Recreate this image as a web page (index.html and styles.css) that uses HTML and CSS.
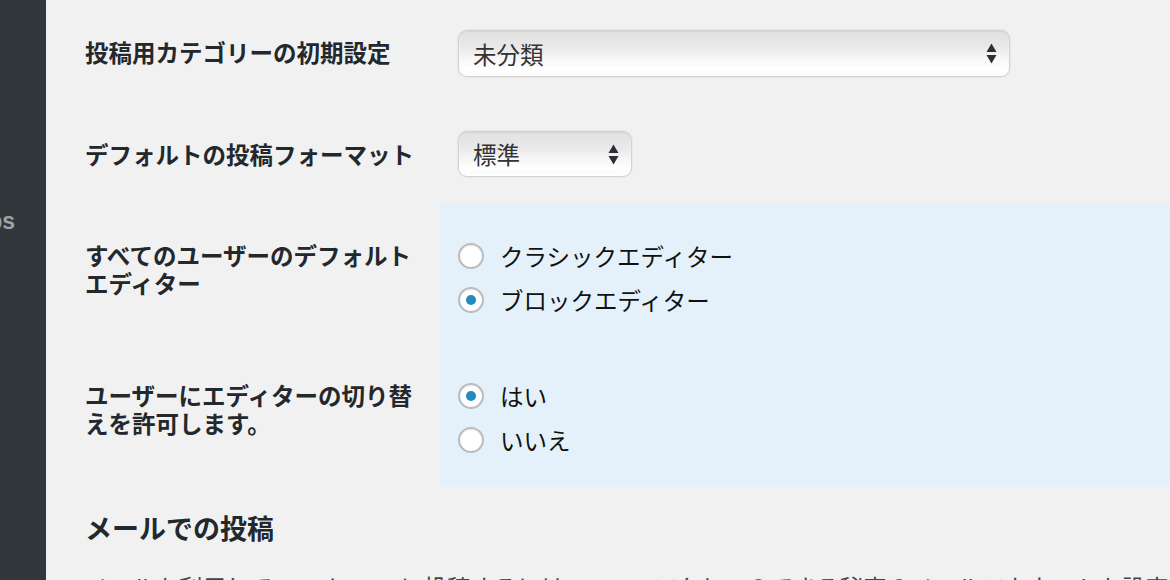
FILE: index.html
```html
<!DOCTYPE html>
<html lang="ja">
<head>
<meta charset="utf-8">
<title>投稿設定</title>
<link rel="stylesheet" href="styles.css">
</head>
<body>
<div class="wrap">
  <nav class="sidebar">
    <div class="menu-item"><span>Popups</span></div>
  </nav>
  <main class="main">
    <div class="form">
      <div class="row row-1">
        <div class="th">投稿用カテゴリーの初期設定</div>
        <div class="td">
          <div class="select select-wide">
            <span class="select-text">未分類</span>
            <svg class="arrows" width="11" height="21" viewBox="0 0 11 21"><path d="M5.5 0.5 L10.5 9 L0.5 9 Z M0.5 12 L10.5 12 L5.5 20.5 Z" fill="#2c3035"/></svg>
          </div>
        </div>
      </div>
      <div class="row row-2">
        <div class="th">デフォルトの投稿フォーマット</div>
        <div class="td">
          <div class="select select-narrow">
            <span class="select-text">標準</span>
            <svg class="arrows" width="11" height="21" viewBox="0 0 11 21"><path d="M5.5 0.5 L10.5 9 L0.5 9 Z M0.5 12 L10.5 12 L5.5 20.5 Z" fill="#2c3035"/></svg>
          </div>
        </div>
      </div>
      <div class="row row-3">
        <div class="th">すべてのユーザーのデフォルトエディター</div>
        <div class="td td-hl">
          <div class="radio-list">
            <label class="radio"><span class="radio-dot"></span><span>クラシックエディター</span></label>
            <label class="radio"><span class="radio-dot checked"></span><span>ブロックエディター</span></label>
          </div>
        </div>
      </div>
      <div class="row row-4">
        <div class="th">ユーザーにエディターの切り替えを許可します。</div>
        <div class="td td-hl">
          <div class="radio-list">
            <label class="radio"><span class="radio-dot checked"></span><span>はい</span></label>
            <label class="radio"><span class="radio-dot"></span><span>いいえ</span></label>
          </div>
        </div>
      </div>
    </div>
    <h2 class="heading">メールでの投稿</h2>
    <p class="desc">メールを利用して WordPress に投稿するには、POP3 アクセスのできる秘密のメールアカウントを設定する必要があります。</p>
  </main>
</div>
</body>
</html>
```

FILE: styles.css
```css
html, body {
  margin: 0;
  padding: 0;
}
body {
  background: #f1f1f1;
  color: #23282d;
  font-family: "Noto Sans CJK JP", "Liberation Sans", sans-serif;
  font-size: 23.5px;
  height: 580px;
  overflow: hidden;
}
.wrap {
  display: flex;
  min-height: 580px;
}
.sidebar {
  width: 46px;
  flex: none;
  background: #32373c;
  padding-top: 206px;
  box-sizing: border-box;
  overflow: hidden;
}
.menu-item {
  display: flex;
  justify-content: flex-end;
  padding-right: 31px;
  height: 30px;
  line-height: 30px;
  white-space: nowrap;
  font-family: "Liberation Sans", "Noto Sans", sans-serif;
  font-size: 23px;
  font-weight: 700;
  color: #9ea3a8;
}
.main {
  flex: 1;
  padding-left: 39px;
  min-width: 0;
}
.row {
  display: grid;
  grid-template-columns: 355px 1fr;
}
.th {
  font-weight: 700;
  line-height: 28px;
  padding-right: 12px;
}
.td {
  padding-left: 18px;
}
.row-1 .th { padding-top: 38px; }
.row-1 .td { padding-top: 30px; padding-bottom: 26px; }
.row-2 .th { padding-top: 37px; }
.row-2 .td { padding-top: 28px; padding-bottom: 26px; }
.row-3 .th { padding-top: 38px; }
.row-3 .td { padding-top: 39px; padding-bottom: 29px; }
.row-4 .th { padding-top: 38px; }
.row-4 .td { padding-top: 39px; padding-bottom: 31px; }
.td-hl {
  background: #e4f1fa;
}
.select {
  display: flex;
  align-items: center;
  box-sizing: border-box;
  height: 47px;
  padding: 0 12px 0 14px;
  border: 1px solid #d3d3d3;
  border-radius: 9px;
  background: linear-gradient(#e1e1e1 0%, #eaeaea 40%, #f6f6f6 60%, #ffffff 85%, #fafafa 100%);
  box-shadow: 0 0 0 1px #e8e8e8, inset 0 1px 1px rgba(0,0,0,0.06), inset 0 -2px 2px rgba(255,255,255,0.9);
  color: #333;
  line-height: 28px;
}
.select-wide { width: 552px; }
.select-narrow { width: 174px; height: 46px; }
.select-text { flex: 1; }
.arrows { flex: none; display: block; }
.radio-list {
  display: flex;
  flex-direction: column;
  gap: 16px;
}
.radio {
  display: flex;
  align-items: center;
  gap: 16px;
  line-height: 28px;
  color: #111;
}
.radio-dot {
  width: 26px;
  height: 26px;
  box-sizing: border-box;
  border-radius: 50%;
  border: 2px solid #b9bcbf;
  background: #fff;
  box-shadow: inset 0 1px 2px rgba(0,0,0,0.08);
  display: flex;
  align-items: center;
  justify-content: center;
  flex: none;
}
.radio-dot.checked::before {
  content: "";
  width: 10px;
  height: 10px;
  border-radius: 50%;
  background: #1e8cbe;
}
.heading {
  margin: 26px 0 0;
  font-size: 27px;
  line-height: 34px;
  font-weight: 700;
  color: #23282d;
}
.desc {
  margin: 28px 0 0;
  line-height: 28px;
  color: #444;
  white-space: nowrap;
}
```
